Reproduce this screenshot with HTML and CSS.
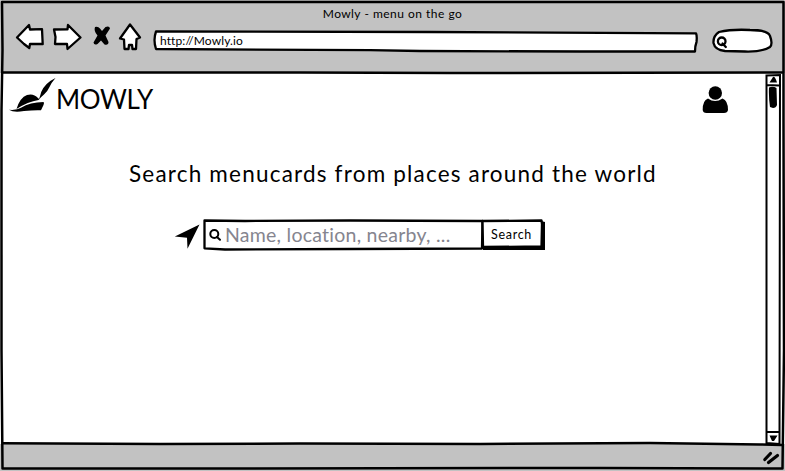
FILE: index.html
```html
<!DOCTYPE html>
<html lang="en">
<head>
<meta charset="utf-8">
<title>Mowly - menu on the go</title>
<link rel="stylesheet" href="styles.css">
</head>
<body>
<div class="window">
  <header class="chrome">
    <div class="title"><span>Mowly - menu on the go</span></div>
    <div class="toolbar">
      <svg class="nav" viewBox="14 20 130 34" width="130" height="34">
        <g class="outline">
          <path d="M17 37.500L29 25L30 29.500L42 29.200L42.700 44L30 44L29.300 48L24 44Z"/>
          <path d="M54 29.500L67.500 29.300L68 25L80.500 37.500L67.500 49L67 44L55 44L55.500 37Z"/>
          <path d="M130 24.500L140 37.500L136.500 39L136 49L132.500 49L132 45L129 45L128.500 49L124.500 49L124 39.500L120 38.500Z"/>
        </g>
        <path d="M95 27Q98 26 100 28.500L102 31L105.500 27Q109.500 25.500 110 28.500L105.500 35.500L108.500 42Q108.500 45.500 104.500 44.500L101 40.500L97.500 44Q94 45.500 93.500 42.500L97.500 35.500Q93.500 31 95 27Z"/>
      </svg>
      <div class="address">
        <svg class="shape" viewBox="153 28 546 26" width="546" height="26"><path class="outline" d="M156 31.500L430 32L696 33.300Q697.200 36 696.500 42Q695 46 695 51.500L580 51.500L420 51L370 50.200L156 49Q153 40 156 31.500Z"/></svg>
        <span>http://Mowly.io</span>
      </div>
      <svg class="quick-search" viewBox="710 26 66 30" width="66" height="30"><path class="outline" d="M719 32Q732 29 750 30Q768 30 770 36Q773 44 770 47Q762 52 745 51.500L725 51Q715 50 713.500 43Q713 36 719 32Z"/><circle class="outline" cx="721.700" cy="41.300" r="3.800"/><path class="outline" d="M722.500 43.500L725.800 47"/></svg>
    </div>
  </header>
  <main class="page">
    <div class="content">
      <div class="brand-row">
        <div class="brand">
          <svg viewBox="8 76 48 38" width="48" height="38"><path d="M16.500 109Q20 97.500 27 95Q33.500 93 38 98Q40 99.800 38.500 100Q28 101.500 16.500 109Z"/><path d="M9 109.800Q17 110.500 21 107.800Q30 102.300 43.500 102Q44.500 102.300 43.500 105L41 110.300Q34 110 24 111Q14 113 9 109.800Z"/><path d="M38.800 99.800Q40.500 95 41.200 92Q45 83 55.500 78Q51.500 82.500 49.500 87Q47.500 91.500 44 94.500Q41.500 96.500 38.800 99.800Z"/></svg>
          <span>MOWLY</span>
        </div>
        <svg class="user" viewBox="702 85 27 29" width="27" height="29"><circle cx="715.300" cy="93" r="6.700"/><path d="M708 98.500Q715 103.500 722.500 98.500Q728 100.500 728 110Q727.500 113 724 113H706.500Q703 113 702.700 110Q702.500 100.500 708 98.500Z"/></svg>
      </div>
      <h1><span>Search menucards from places around the world</span></h1>
      <form class="search">
        <svg class="locate" viewBox="174 222 28 28" width="28" height="28"><path d="M199.500 224.500L187.500 248.700L187 237.800L174.800 236.500Z"/></svg>
        <div class="field">
          <svg class="shape" viewBox="202 218 282 34" width="282" height="34"><path class="outline" d="M204.500 220.500L245 221L350 220.500L482.500 221L482 248.500L350 249L225 249.500L204.500 248.300Z"/></svg>
          <svg class="glass" viewBox="208 228 14 14" width="14" height="14"><circle cx="214.300" cy="234" r="4"/><path d="M217 237L220 239.800"/></svg>
          <span>Name, location, nearby, ...</span>
        </div>
        <div class="button">
          <svg class="shape" viewBox="481 218 66 34" width="66" height="34"><path d="M483 247H541V221L545 222V250H483Z"/><path class="outline" d="M482.500 221L541.500 220.500L542 224L541.500 246.500L483 247Z"/></svg>
          <span>Search</span>
        </div>
      </form>
    </div>
    <svg class="scroll" viewBox="764 73 18 371" width="18" height="371"><path class="thin" d="M766.500 75.500L780 75L779.500 444L766.500 443Z M766.500 85L779 85.500M766.500 432H779.500"/><path d="M769.500 82.500L773 77Q775 76 777 82.500ZM769 87.500Q773 86 776.500 88L777 105Q776 108 773 108L770 107Q768.500 97 769 87.500ZM769.500 435.500H777.500L774 441H772Z"/></svg>
  </main>
  <footer class="status"><svg viewBox="762 450 18 16" width="18" height="16"><path class="grip" d="M764.800 459.500L770.500 453.500M768.500 462.500L777.500 455.500"/></svg></footer>
  <svg class="frame" viewBox="0 0 785 471" width="785" height="471"><path d="M2 2H783.500V120L784 350L782.500 468.500L600 468L200 468.500L2.500 468.500L1.500 350L1.500 110L2.500 50Z"/><path d="M2 72.500H300L450 73L783 72.500M2 443.200L160 444L300 443.500L480 444L650 443L760 444.500L782 445"/></svg>
</div>
</body>
</html>
```
FILE: styles.css
```css
body { margin: 0; background: #fff; color: #000; font-family: Lato, "Open Sans", sans-serif; }
.window { position: relative; width: 785px; height: 471px; display: grid; grid-template-rows: 73px 371px 27px; overflow: hidden; }
.window svg { display: block; flex: none; }
.chrome, .status { background: #c2c2c2; }
.chrome { display: flex; flex-direction: column; }
.title { height: 20px; padding-top: 6px; box-sizing: border-box; text-align: center; font-size: 12px; line-height: 15px; letter-spacing: .4px; word-spacing: .3px; }
.toolbar { display: flex; padding-left: 14px; }
.outline { fill: #fff; stroke: #000; stroke-width: 2.3; stroke-linejoin: round; stroke-linecap: round; }
.address { position: relative; width: 546px; height: 26px; margin: 8px 0 0 9px; }
.shape { position: absolute; left: 0; top: 0; }
.address span { position: relative; display: block; padding: 5px 0 0 7px; font-size: 12px; line-height: 15px; letter-spacing: .1px; }
.quick-search { margin: 6px 0 0 11px; }
.page { display: flex; }
.content { width: 764px; }
.brand-row { display: flex; justify-content: space-between; padding: 3px 35px 0 8px; height: 38px; }
.brand { display: flex; }
.brand span { font-size: 26px; line-height: 32px; padding-top: 7px; letter-spacing: -.4px; }
.user { margin-top: 9px; }
h1 { margin: 43px 0 0 129px; font-weight: 400; font-size: 22.500px; line-height: 34px; height: 34px; letter-spacing: 1.22px; word-spacing: -.2px; white-space: nowrap; }
.search { display: flex; margin: 27px 0 0 174px; height: 34px; }
.locate { margin-top: 4px; }
.field { position: relative; width: 279px; display: flex; white-space: nowrap; }
.glass { position: relative; margin: 10px 0 0 6px; fill: none; stroke: #000; stroke-width: 2; stroke-linecap: round; }
.field span { position: relative; margin-left: 3px; font-size: 19.500px; line-height: 33px; color: #85858f; letter-spacing: .25px; }
.button { position: relative; width: 66px; }
.button span { position: relative; display: block; padding-left: 10px; font-size: 12.500px; line-height: 34px; letter-spacing: .7px; }
.scroll .thin { fill: #fff; stroke: #000; stroke-width: 2; }
.status { display: flex; justify-content: flex-end; padding: 6px 5px 0 0; }
.grip { fill: none; stroke: #000; stroke-width: 3.200; stroke-linecap: round; }
.frame { position: absolute; left: 0; top: 0; fill: none; stroke: #000; stroke-width: 2.500; stroke-linejoin: round; pointer-events: none; }
```
